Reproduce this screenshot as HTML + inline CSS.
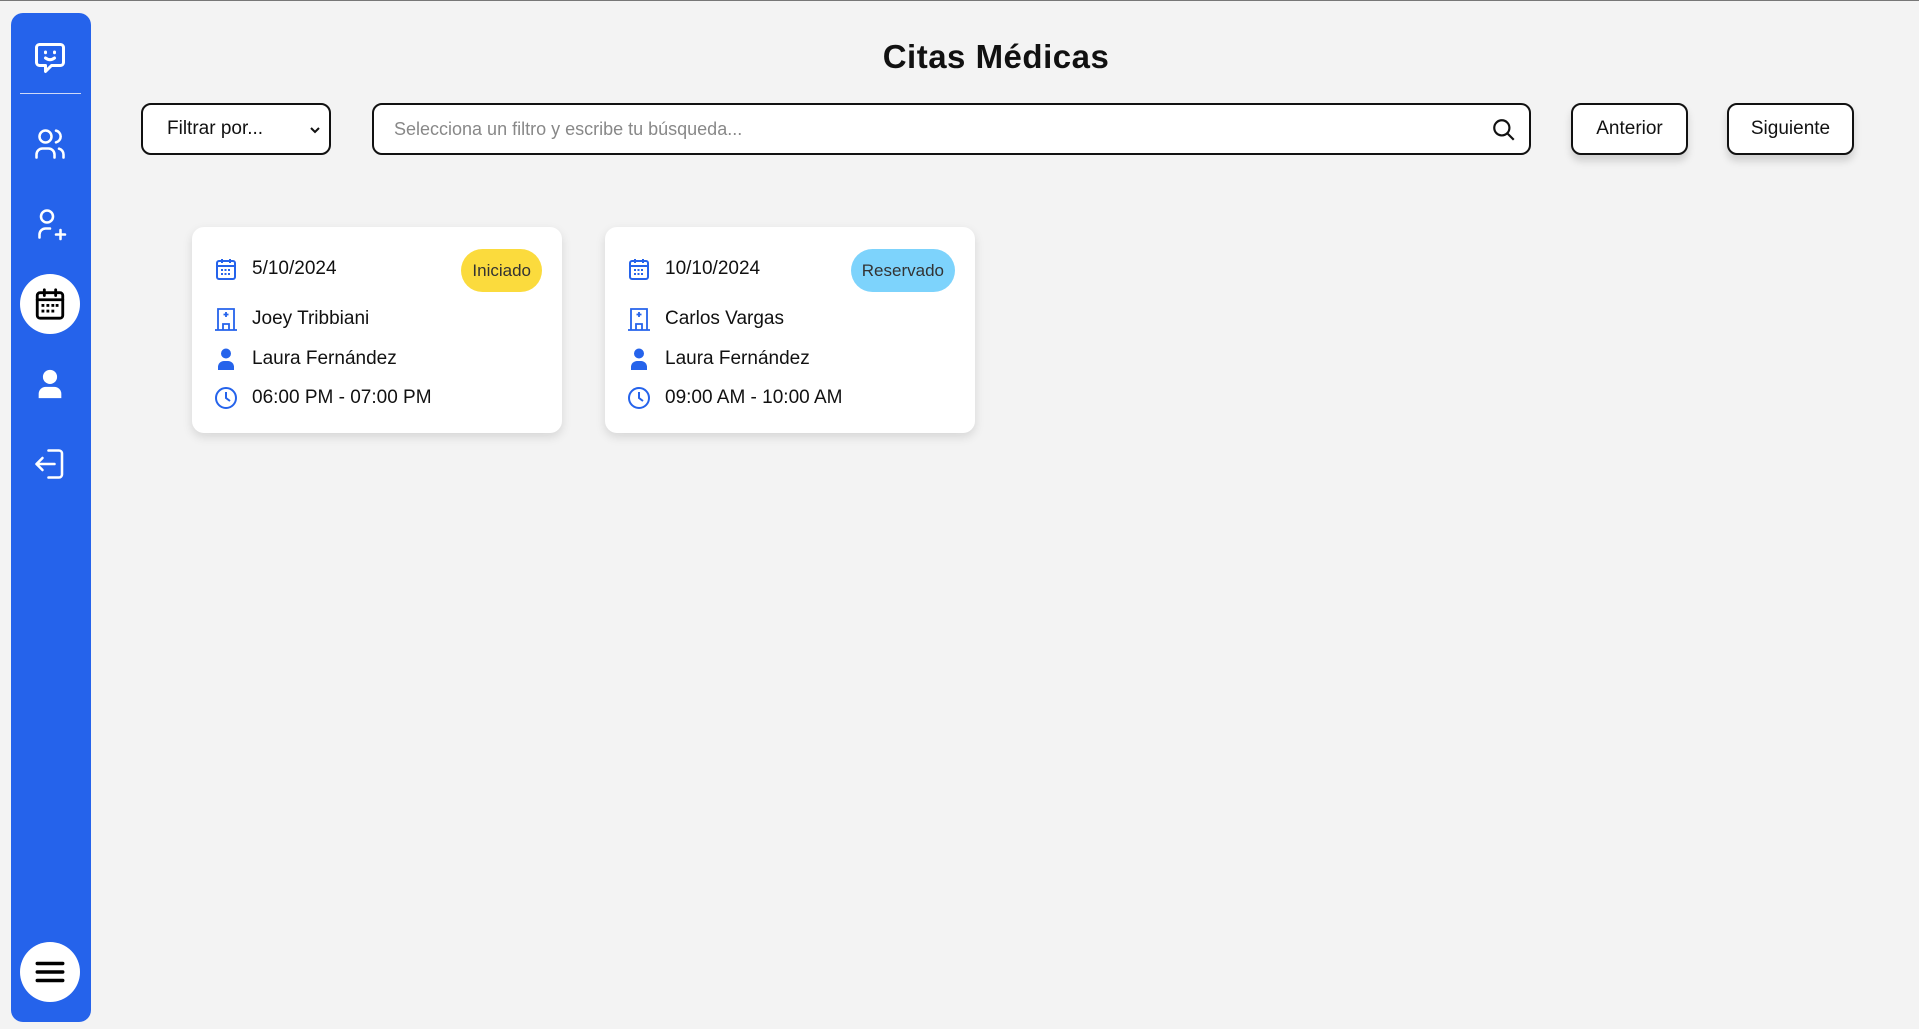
<!DOCTYPE html>
<html><head><meta charset="utf-8"><style>
*{box-sizing:border-box;margin:0;padding:0}
body{width:1919px;height:1029px;background:#f3f3f3;font-family:"Liberation Sans",sans-serif;position:relative;overflow:hidden;border-top:1px solid #777}
.sb{position:absolute;left:11px;top:12px;width:80px;height:1009px;background:#2563eb;border-radius:12px}
.ic{position:absolute;left:39px;transform:translate(-50%,-50%)}
.circ{position:absolute;left:9px;width:60px;height:60px;border-radius:50%;background:#fff}
h1{position:absolute;left:0;width:1992px;top:37px;text-align:center;font-size:33px;font-weight:bold;color:#111;letter-spacing:0.5px}
.box{position:absolute;top:102px;height:52px;border:2px solid #111;border-radius:10px;background:#fff;font-size:19px;color:#111;display:flex;align-items:center}
.btn{box-shadow:0 6px 8px rgba(0,0,0,.15);justify-content:center}
.card{position:absolute;top:226px;width:370px;height:206px;background:#fff;border-radius:12px;box-shadow:0 4px 10px rgba(0,0,0,.12)}
.row{position:absolute;left:22px;display:flex;align-items:center;font-size:19px;color:#111}
.row svg{margin-right:14px}
.badge{position:absolute;top:22px;right:20px;height:43px;border-radius:22px;font-size:17px;display:flex;align-items:center;padding:0 11px;color:#333}
</style></head><body>
<div class="sb">
<svg class="ic" style="top:45px" width="36" height="36" viewBox="0 0 24 24" fill="none" stroke="#fff" stroke-width="2" stroke-linecap="round" stroke-linejoin="round"><path d="M5 3h14a2 2 0 0 1 2 2v10a2 2 0 0 1-2 2h-6l-4 4v-4H5a2 2 0 0 1-2-2V5a2 2 0 0 1 2-2z"/><path d="M9 8v.5M15 8v.5M9 12c2 1.5 4 1.5 6 0"/></svg>
<div style="position:absolute;left:9px;width:61px;top:80px;height:1px;background:#cfd9f7"></div>
<svg class="ic" style="top:131px" width="36" height="36" viewBox="0 0 24 24" fill="none" stroke="#fff" stroke-width="1.7" stroke-linecap="round"><circle cx="9" cy="7" r="4"/><path d="M3 21v-2a4 4 0 0 1 4-4h4a4 4 0 0 1 4 4v2M16 3.1a4 4 0 0 1 0 7.8M21 21v-2a4 4 0 0 0-3-3.9"/></svg>
<svg class="ic" style="top:211px" width="36" height="36" viewBox="0 0 24 24" fill="none" stroke="#fff" stroke-width="1.7" stroke-linecap="round"><circle cx="10" cy="7" r="4"/><path d="M5 21v-2a4 4 0 0 1 4-4h3M16 19h6M19 16v6"/></svg>
<div class="circ" style="top:261px"></div>
<svg class="ic" style="top:291px" width="34" height="34" viewBox="0 0 24 24" fill="none" stroke="#000" stroke-width="2" stroke-linecap="round"><rect x="3" y="4" width="18" height="18" rx="2"/><path d="M8 2v4M16 2v4M3 9h18"/><g fill="#000" stroke="none"><rect x="6" y="12" width="2" height="2"/><rect x="9.5" y="12" width="2" height="2"/><rect x="13" y="12" width="2" height="2"/><rect x="16" y="12" width="2" height="2"/><rect x="6" y="16" width="2" height="2"/><rect x="9.5" y="16" width="2" height="2"/><rect x="13" y="16" width="2" height="2"/></g></svg>
<svg class="ic" style="top:371px" width="34" height="34" viewBox="0 0 24 24" fill="#fff"><circle cx="12" cy="7" r="5"/><path d="M4 22v-3a5 5 0 0 1 5-5h6a5 5 0 0 1 5 5v3z"/></svg>
<svg class="ic" style="top:451px" width="36" height="36" viewBox="0 0 24 24" fill="none" stroke="#fff" stroke-width="1.7" stroke-linecap="round" stroke-linejoin="round"><path d="M11 3h7a2 2 0 0 1 2 2v14a2 2 0 0 1-2 2h-7M15 12H3M7 8l-4 4 4 4"/></svg>
<div class="circ" style="top:929px"></div>
<svg class="ic" style="top:959px" width="34" height="34" viewBox="0 0 24 24" stroke="#000" stroke-width="2.4" stroke-linecap="round"><path d="M3 6h18M3 12h18M3 18h18"/></svg>
</div>
<h1>Citas Médicas</h1>
<div class="box" style="left:141px;width:190px;padding-left:24px">Filtrar por...<svg style="position:absolute;right:8px;top:20px" width="12" height="10" viewBox="0 0 12 10" fill="none" stroke="#111" stroke-width="2"><path d="M2 3l4 4 4-4"/></svg></div>
<div class="box" style="left:372px;width:1159px;padding-left:20px;color:#888;font-size:18px">Selecciona un filtro y escribe tu búsqueda...
<svg style="position:absolute;right:12px;top:12px" width="26" height="26" viewBox="0 0 24 24" fill="none" stroke="#111" stroke-width="2"><circle cx="10" cy="10" r="7"/><path d="M15 15l6 6"/></svg></div>
<div class="box btn" style="left:1571px;width:117px">Anterior</div>
<div class="box btn" style="left:1727px;width:127px">Siguiente</div>

<div class="card" style="left:192px">
<div class="row" style="top:30px"><svg width="24" height="24" viewBox="0 0 24 24" fill="none" stroke="#2563eb" stroke-width="2"><rect x="3" y="4" width="18" height="18" rx="2"/><path d="M8 2v4M16 2v4M3 9h18"/><path d="M7 13h10M7 17h10" stroke-dasharray="2 1.5"/></svg>5/10/2024</div>
<div class="badge" style="background:#fbdb3d">Iniciado</div>
<div class="row" style="top:79px"><svg width="24" height="26" viewBox="0 0 24 26" fill="none" stroke="#2563eb" stroke-width="1.8"><path d="M4 24V3h16v21M1 24h22M12 6v5M9.5 8.5h5M9 24v-6h6v6"/></svg>Joey Tribbiani</div>
<div class="row" style="top:119px"><svg width="24" height="26" viewBox="0 0 24 24" fill="#2563eb"><circle cx="12" cy="6.5" r="5"/><path d="M4 23v-3a6 6 0 0 1 6-6h4a6 6 0 0 1 6 6v3z"/></svg>Laura Fernández</div>
<div class="row" style="top:159px"><svg width="24" height="24" viewBox="0 0 24 24" fill="none" stroke="#2563eb" stroke-width="2"><circle cx="12" cy="12" r="10"/><path d="M12 6v6l4 3"/></svg>06:00 PM - 07:00 PM</div>
</div>
<div class="card" style="left:605px">
<div class="row" style="top:30px"><svg width="24" height="24" viewBox="0 0 24 24" fill="none" stroke="#2563eb" stroke-width="2"><rect x="3" y="4" width="18" height="18" rx="2"/><path d="M8 2v4M16 2v4M3 9h18"/><path d="M7 13h10M7 17h10" stroke-dasharray="2 1.5"/></svg>10/10/2024</div>
<div class="badge" style="background:#7dd3fc">Reservado</div>
<div class="row" style="top:79px"><svg width="24" height="26" viewBox="0 0 24 26" fill="none" stroke="#2563eb" stroke-width="1.8"><path d="M4 24V3h16v21M1 24h22M12 6v5M9.5 8.5h5M9 24v-6h6v6"/></svg>Carlos Vargas</div>
<div class="row" style="top:119px"><svg width="24" height="26" viewBox="0 0 24 24" fill="#2563eb"><circle cx="12" cy="6.5" r="5"/><path d="M4 23v-3a6 6 0 0 1 6-6h4a6 6 0 0 1 6 6v3z"/></svg>Laura Fernández</div>
<div class="row" style="top:159px"><svg width="24" height="24" viewBox="0 0 24 24" fill="none" stroke="#2563eb" stroke-width="2"><circle cx="12" cy="12" r="10"/><path d="M12 6v6l4 3"/></svg>09:00 AM - 10:00 AM</div>
</div>
</body></html>
